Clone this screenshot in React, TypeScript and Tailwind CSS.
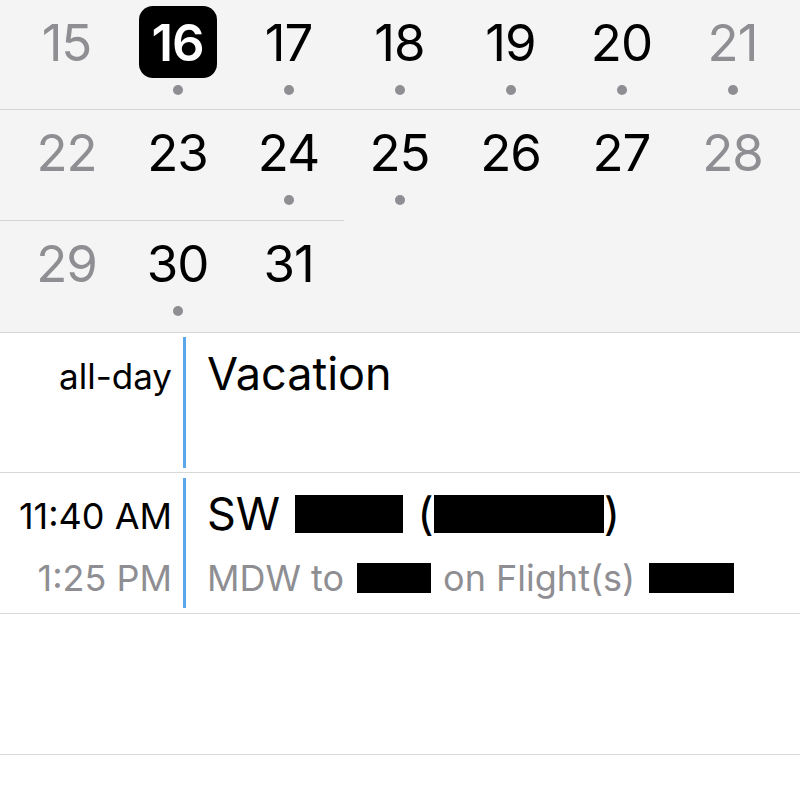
const rows = [
  [
    { d: 15, muted: true, dot: false },
    { d: 16, selected: true, dot: true },
    { d: 17, dot: true },
    { d: 18, dot: true },
    { d: 19, dot: true },
    { d: 20, dot: true },
    { d: 21, muted: true, dot: true },
  ],
  [
    { d: 22, muted: true, dot: false },
    { d: 23, dot: false },
    { d: 24, dot: true },
    { d: 25, dot: true },
    { d: 26, dot: false },
    { d: 27, dot: false },
    { d: 28, muted: true, dot: false },
  ],
  [
    { d: 29, muted: true, dot: false },
    { d: 30, dot: true },
    { d: 31, dot: false },
  ],
];

type Day = { d: number; muted?: boolean; selected?: boolean; dot: boolean };

function DayCell({ day }: { day: Day }) {
  return (
    <div className="flex flex-col items-center">
      <div
        className={
          day.selected
            ? "w-[78px] h-[72px] rounded-[14px] bg-black text-white font-semibold flex items-center justify-center"
            : day.muted
            ? "w-[78px] h-[72px] text-[#8e8e93] flex items-center justify-center"
            : "w-[78px] h-[72px] text-black flex items-center justify-center"
        }
      >
        <span className="text-[51px] leading-none tracking-[-1px]">{day.d}</span>
      </div>
      <div
        className={
          day.dot
            ? "mt-[7px] w-[10px] h-[10px] rounded-full bg-[#8e8e93]"
            : "mt-[7px] w-[10px] h-[10px]"
        }
      />
    </div>
  );
}

export default function App() {
  return (
    <div
      className="w-[800px] h-[787px] bg-white overflow-hidden"
      style={{ fontFamily: "Inter, 'Liberation Sans', sans-serif" }}
    >
      <div className="bg-[#f4f4f4]">
        <div className="h-[109px] pt-[6px] px-[11px] grid grid-cols-[repeat(7,111px)]">
          {rows[0].map((day) => (
            <DayCell key={day.d} day={day} />
          ))}
        </div>
        <div className="h-px bg-[#d6d6d6]" />
        <div className="h-[110px] pt-[6px] px-[11px] grid grid-cols-[repeat(7,111px)]">
          {rows[1].map((day) => (
            <DayCell key={day.d} day={day} />
          ))}
        </div>
        <div className="h-px w-[344px] bg-[#d6d6d6]" />
        <div className="h-[111px] pt-[6px] px-[11px] grid grid-cols-[repeat(7,111px)]">
          {rows[2].map((day) => (
            <DayCell key={day.d} day={day} />
          ))}
        </div>
      </div>

      <div className="h-px bg-[#d8d8d8]" />
      <div className="h-[139px] flex">
        <div className="w-[172px] pt-[26px] text-right text-[35px] leading-none text-black whitespace-nowrap">all-day</div>
        <div className="ml-[11px] my-[4px] w-[3px] bg-[#5ba7ea]" />
        <div className="ml-[21px] pt-[18px] text-[45px] leading-none text-black">Vacation</div>
      </div>

      <div className="h-px bg-[#d8d8d8]" />
      <div className="h-[140px] flex">
        <div className="w-[172px] pt-[25px] text-right leading-none text-[36px] flex flex-col items-end whitespace-nowrap">
          <span className="text-black">11:40 AM</span>
          <span className="mt-[26px] text-[#8e8e93]">1:25 PM</span>
        </div>
        <div className="ml-[11px] my-[5px] w-[3px] bg-[#5ba7ea]" />
        <div className="ml-[21px] flex flex-col">
          <div className="pt-[18px] text-[45px] leading-none text-black flex items-center whitespace-nowrap">
            <span>SW</span>
            <span className="ml-[15px] inline-block w-[108px] h-[38px] bg-black" />
            <span className="ml-[14px]">(</span>
            <span className="inline-block w-[170px] h-[38px] bg-black" />
            <span>)</span>
          </div>
          <div className="mt-[24px] text-[36px] leading-none text-[#8e8e93] flex items-center whitespace-nowrap">
            <span>MDW to</span>
            <span className="ml-[13px] inline-block w-[74px] h-[30px] bg-black" />
            <span className="ml-[12px]">on Flight(s)</span>
            <span className="ml-[14px] inline-block w-[85px] h-[30px] bg-black" />
          </div>
        </div>
      </div>

      <div className="h-px bg-[#d8d8d8]" />
      <div className="h-[140px]" />
      <div className="h-px bg-[#d8d8d8]" />
    </div>
  );
}
